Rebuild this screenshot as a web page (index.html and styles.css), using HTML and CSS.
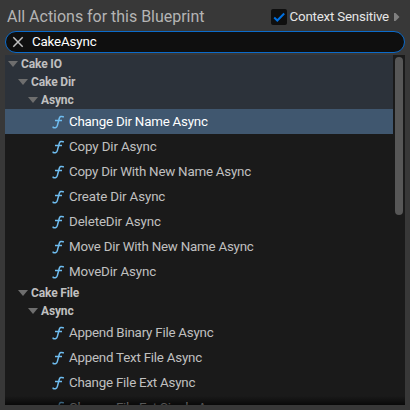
FILE: index.html
```html
<!DOCTYPE html>
<html lang="en">
<head>
<meta charset="utf-8">
<title>All Actions for this Blueprint</title>
<link rel="stylesheet" href="styles.css">
</head>
<body>
<svg width="0" height="0" class="defs" aria-hidden="true">
  <symbol id="fn" viewBox="0 0 12 14"><path d="M11.200 2.600V1.700C9.300 1.100 7.800 1.400 7.300 3.200L5.300 10.600C4.800 12.500 3.300 13.100 1.200 12.500V11.400M3 5.500H10"/></symbol>
</svg>
<div class="panel">
  <header class="header">
    <h1 class="title">All Actions for this Blueprint</h1>
    <label class="context">
      <span class="check"><svg width="16" height="16" viewBox="0 0 16 16"><path d="M3.200 8.500L6.300 11.500L13.200 4.500"/></svg></span>
      <span class="context-label">Context Sensitive</span>
      <svg class="more" width="6" height="8" viewBox="0 0 6 8"><path d="M0 0H1.500L5.500 4L1.500 8H0Z"/></svg>
    </label>
  </header>
  <div class="search">
    <svg class="clear" width="12" height="12" viewBox="0 0 12 12"><path d="M1.300 1.300L10.700 10.700M10.700 1.300L1.300 10.700"/></svg>
    <span class="query">CakeAsync</span>
  </div>
  <main class="tree">
    <div class="rows">
      <div class="cat lit"><i class="arrow"></i>Cake IO</div>
      <div class="cat lit l1"><i class="arrow"></i>Cake Dir</div>
      <div class="cat lit l2"><i class="arrow"></i>Async</div>
      <div class="item selected"><svg class="fn"><use href="#fn"/></svg>Change Dir Name Async</div>
      <div class="item short"><svg class="fn"><use href="#fn"/></svg>Copy Dir Async</div>
      <div class="item"><svg class="fn"><use href="#fn"/></svg>Copy Dir With New Name Async</div>
      <div class="item short"><svg class="fn"><use href="#fn"/></svg>Create Dir Async</div>
      <div class="item short"><svg class="fn"><use href="#fn"/></svg>DeleteDir Async</div>
      <div class="item"><svg class="fn"><use href="#fn"/></svg>Move Dir With New Name Async</div>
      <div class="item short"><svg class="fn"><use href="#fn"/></svg>MoveDir Async</div>
      <div class="cat l1"><i class="arrow"></i>Cake File</div>
      <div class="cat l2"><i class="arrow"></i>Async</div>
      <div class="item"><svg class="fn"><use href="#fn"/></svg>Append Binary File Async</div>
      <div class="item"><svg class="fn"><use href="#fn"/></svg>Append Text File Async</div>
      <div class="item"><svg class="fn"><use href="#fn"/></svg>Change File Ext Async</div>
      <div class="item"><svg class="fn"><use href="#fn"/></svg>Change File Ext Single Async</div>
    </div>
    <div class="scrollbar"><div class="thumb"></div></div>
  </main>
</div>
</body>
</html>
```
FILE: styles.css
```css
* { box-sizing: border-box; }
body { margin: 0; background: #383838; font-family: Roboto, "Liberation Sans", sans-serif; }
.defs { position: absolute; }
.panel { width: 410px; height: 410px; padding: 0 5px 5px; display: flex; flex-direction: column; overflow: hidden; }
.header { height: 31px; padding: 2px 5px 0 2px; display: flex; align-items: center; justify-content: space-between; flex: none; }
.title { margin: 0; font-size: 16px; font-weight: 400; line-height: 20px; letter-spacing: -0.02px; color: #b4b4b4; white-space: nowrap; }
.context { display: flex; align-items: center; }
.check { width: 16px; height: 16px; border-radius: 2px; background: #0f0f0f; margin-right: 3px; }
.check svg { display: block; fill: none; stroke: #0070e0; stroke-width: 2; }
.context-label { font-size: 13.333px; line-height: 16px; letter-spacing: -0.2px; color: #e6e6e6; white-space: nowrap; }
.more { fill: #808080; margin-left: 5px; }
.search { height: 22px; flex: none; border: 1px solid #0b6bcb; border-radius: 11px; background: #0f0f0f; display: flex; align-items: center; padding-left: 6px; }
.clear { fill: none; stroke: #c0c0c0; stroke-width: 1.5; }
.query { font-size: 13.333px; line-height: 16px; letter-spacing: -0.15px; margin-left: 8px; color: #fff; }
.tree { position: relative; margin-top: 2px; height: 350px; flex: none; display: flex; background: #1a1a1a; overflow: hidden; }
.tree::after { content: ""; position: absolute; left: 0; right: 0; bottom: 0; height: 9px; background: linear-gradient(transparent, rgba(0, 0, 0, .65)); }
.rows { width: 388px; flex: none; }
.cat { height: 18px; padding-left: 3px; display: flex; align-items: center; font-size: 12px; font-weight: 700; letter-spacing: -0.14px; color: #c0c0c0; white-space: pre; }
.l1 { padding-left: 13px; }
.l2 { padding-left: 23px; }
.lit { background: #2c323a; }
.arrow { width: 10px; height: 6px; margin-right: 3px; background: #6e6e6e; clip-path: polygon(0 0, 100% 0, 50% 100%); }
.item { height: 25px; padding-left: 47px; display: flex; align-items: center; font-size: 13.333px; letter-spacing: -0.22px; color: #c0c0c0; white-space: nowrap; }
.short { letter-spacing: -0.12px; }
.selected { background: #40576f; color: #fff; }
.fn { width: 12px; height: 14px; margin-right: 5px; fill: none; stroke: #6fbdf0; stroke-width: 1.5; }
.scrollbar { width: 12px; padding: 2px 2px 0; background: #1a1a1a; }
.thumb { width: 8px; height: 158px; border-radius: 4px; background: #575757; }
```
